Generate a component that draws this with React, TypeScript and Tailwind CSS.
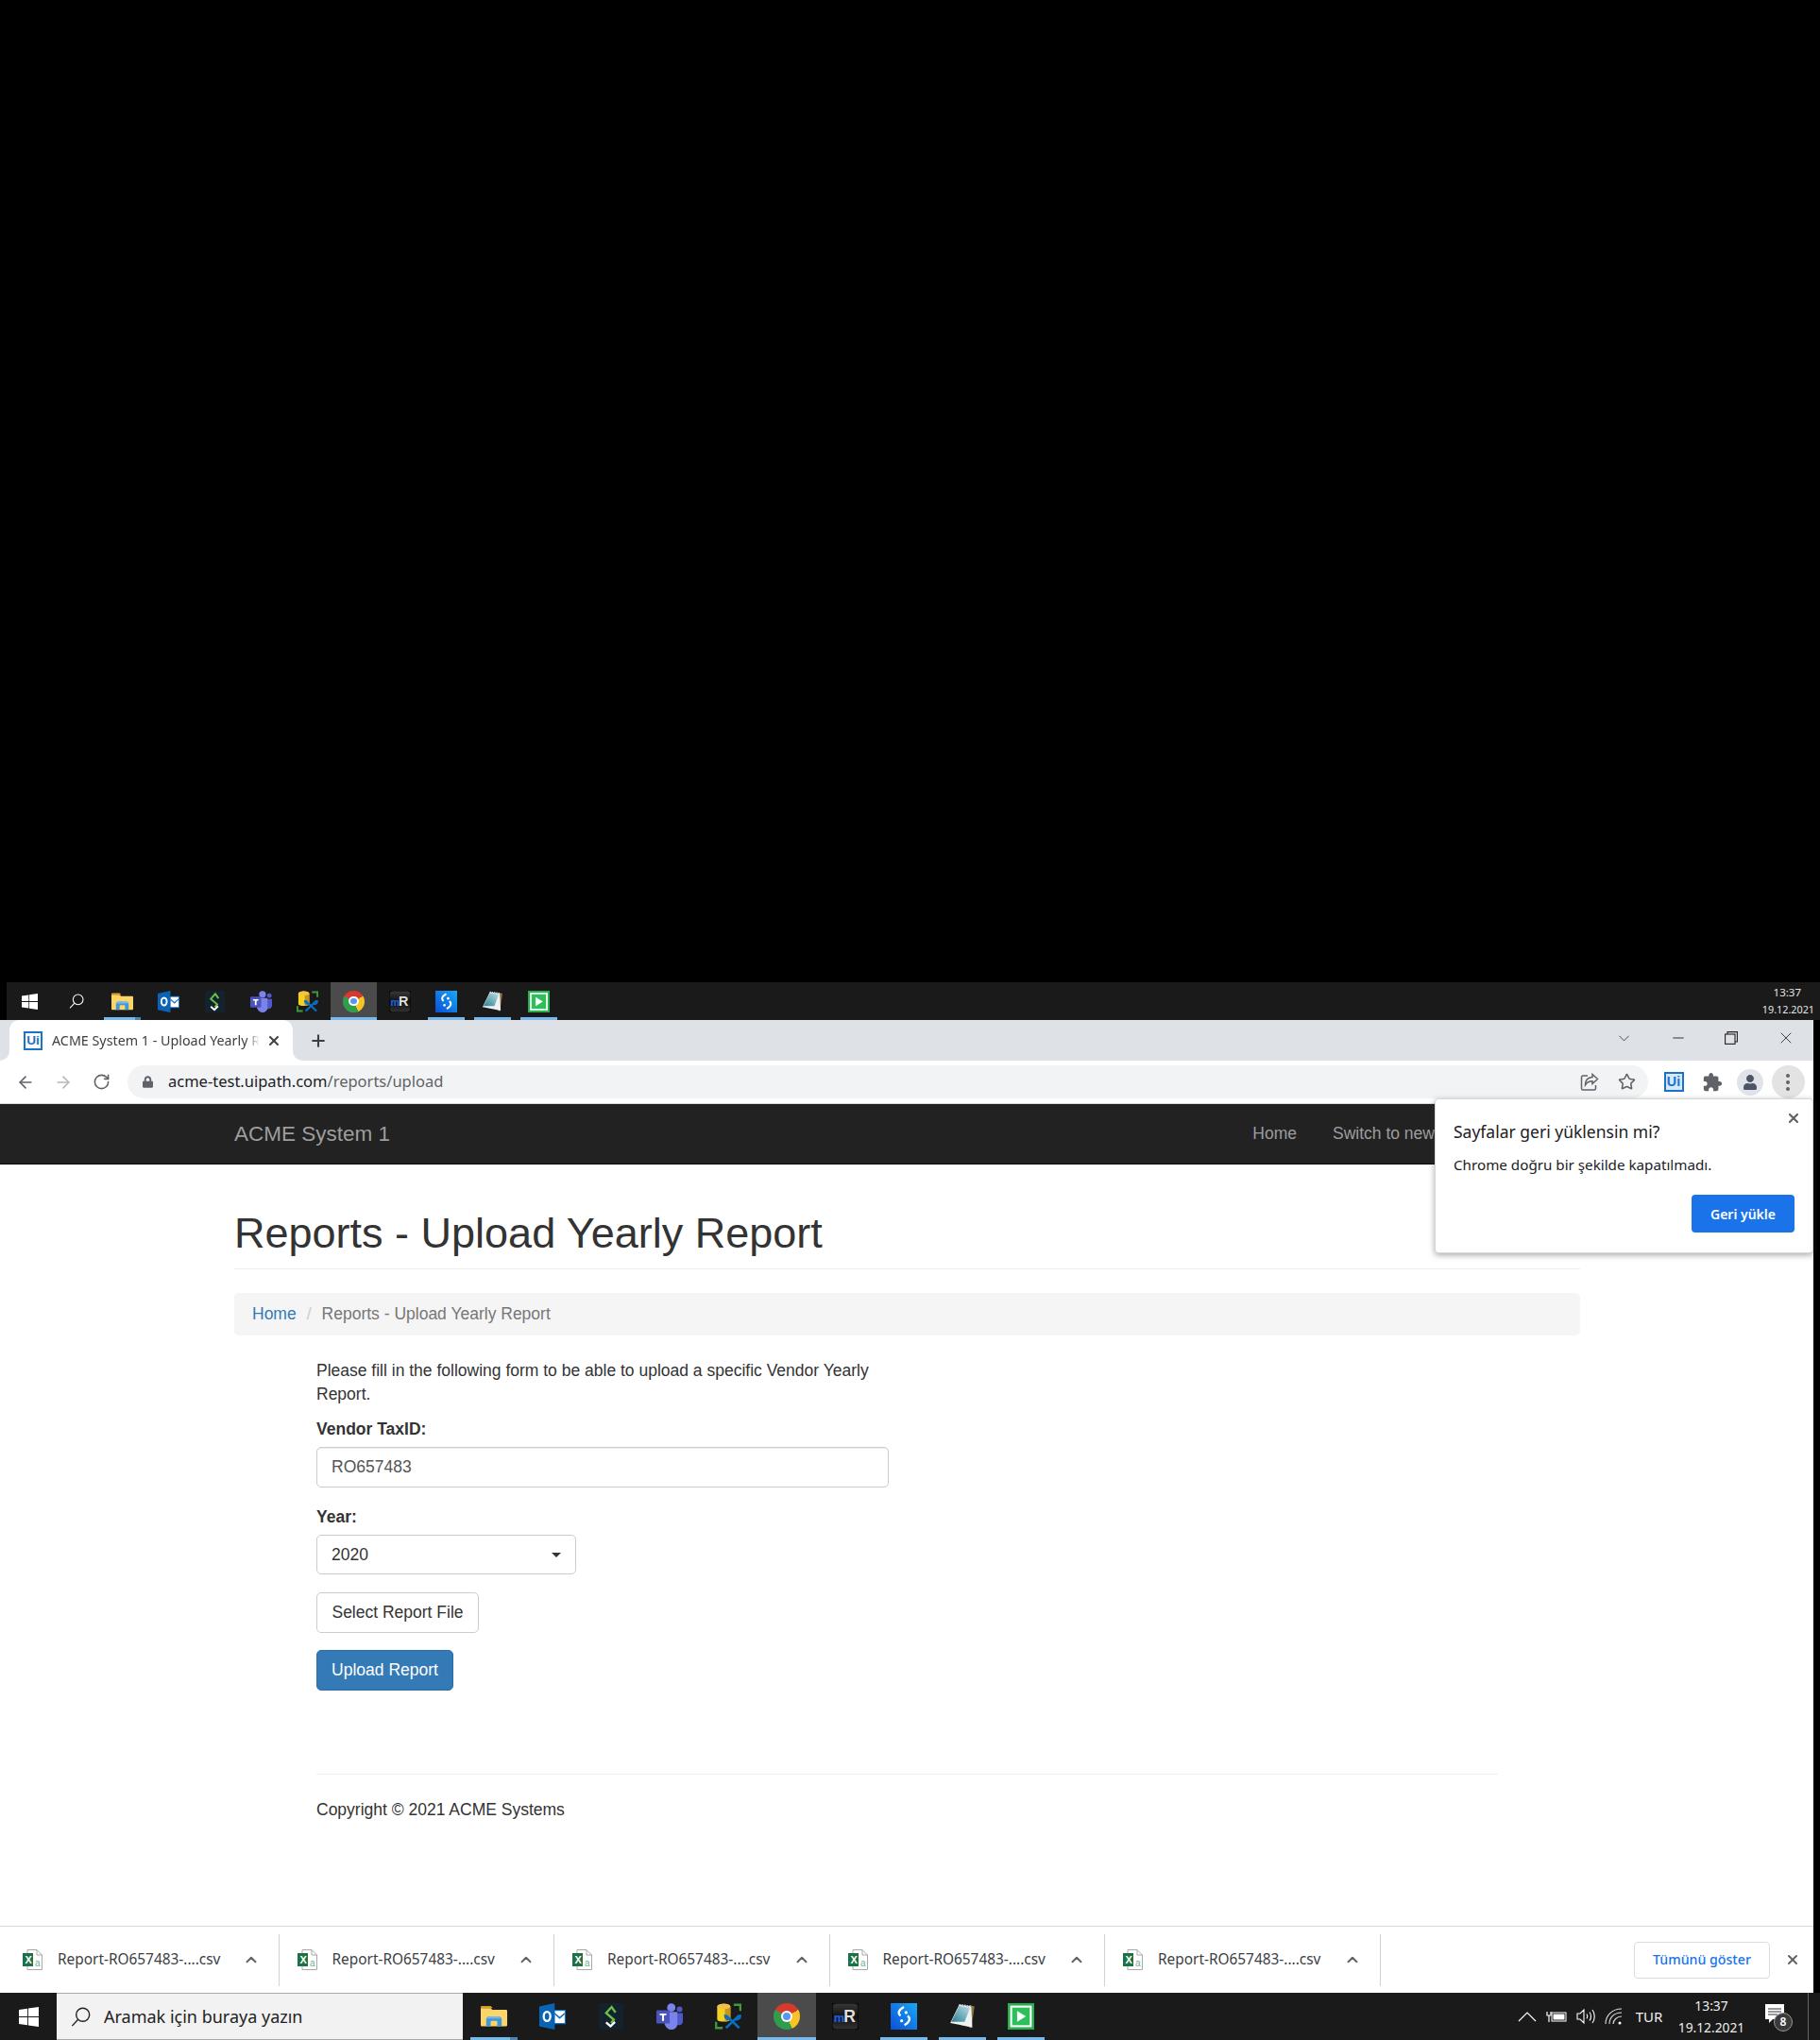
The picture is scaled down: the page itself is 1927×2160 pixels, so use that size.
import React from 'react';
import { ArrowLeft, ArrowRight, RotateCw, Star, X, Plus, ChevronDown, ChevronUp, Minus } from 'lucide-react';
import { FaUser, FaLock } from 'react-icons/fa';

type P = { s: number };
const WinLogo = ({ s }: P) => (
  <svg width={s} height={s} viewBox="0 0 24 24" fill="#fff"><path d="M0 3.4 10.4 2v9.4H0zM11.4 1.8 24 0v11.4H11.4zM0 12.6h10.4V22L0 20.6zM11.4 12.6H24V24l-12.6-1.8z" /></svg>
);
const Mag = ({ s, c }: { s: number; c: string }) => (
  <svg width={s} height={s} viewBox="0 0 24 24" fill="none" stroke={c} strokeWidth="1.6"><circle cx="14.5" cy="9.5" r="8" /><path d="M8.5 15.5 1.5 23" /></svg>
);
const Folder = ({ s }: P) => (
  <svg width={s} height={s} viewBox="0 0 24 24"><path d="M0 3.5A1 1 0 0 1 1 2.5h8l2 2h-11z" fill="#dd9c1c" /><path d="M0 4.5h9l1.5 1.5H23a1 1 0 0 1 1 1v13a1 1 0 0 1-1 1H1a1 1 0 0 1-1-1z" fill="#fcd568" /><path d="M5 21v-6a3 3 0 0 1 3-3h8a3 3 0 0 1 3 3v6h-4v-4a1 1 0 0 0-1-1h-4a1 1 0 0 0-1 1v4z" fill="#3f97dc" /><path d="M8 12h8a3 3 0 0 1 3 2H5a3 3 0 0 1 3-2z" fill="#74b8ec" /></svg>
);
const Outlook = ({ s }: P) => (
  <svg width={s} height={s} viewBox="0 0 24 24"><path d="M13 6h11v13H13z" fill="#1474c4" /><path d="M14 7h9v11h-9z" fill="#fff" /><path d="m14 8.5 4.5 4 4.5-4v1.8l-4.5 4-4.5-4z" fill="#1474c4" /><path d="M0 3 14 0v24L0 21z" fill="#0a64b5" /><ellipse cx="7" cy="12" rx="3" ry="4.2" fill="none" stroke="#fff" strokeWidth="2" /></svg>
);
const SApp = ({ s }: P) => (
  <svg width={s} height={s} viewBox="0 0 24 24"><rect x="1" y="0" width="22" height="24" rx="2" fill="#14222e" /><path d="M16 8.5 12.5 3.5 7.5 9l7 6-2.5 3" fill="none" stroke="#6cc04a" strokeWidth="2" /><path d="m7.5 17.5 4 3.5 4-4" fill="none" stroke="#fff" strokeWidth="2" /></svg>
);
const Teams = ({ s }: P) => (
  <svg width={s} height={s} viewBox="0 0 24 24"><circle cx="13.5" cy="4" r="3.8" fill="#7b83eb" /><circle cx="21" cy="5.5" r="2.6" fill="#5059c9" /><path d="M16 9h8v7c0 3-2 4-4 4h-4z" fill="#5059c9" /><path d="M8 8h11v11c0 3-3 5-5.500 5S8.500 22 7.500 19z" fill="#7b83eb" /><rect x="0" y="6.500" width="12" height="12" rx="1" fill="#4b53bc" /><path d="M3 9.500h6V11H6.900v5H5.100v-5H3z" fill="#fff" /></svg>
);
const DbTool = ({ s }: P) => (
  <svg width={s} height={s} viewBox="0 0 24 24"><path d="M2 3.500c0-4 12-4 12 0v11c0 3-12 3-12 0z" fill="#f4d21f" /><path d="M9 1.500c3 .300 5 1 5 2v11c0 1-2 2-5 2z" fill="#c9961d" /><ellipse cx="8" cy="3" rx="6" ry="2.400" fill="#f2c14a" /><path d="M17 1.500h6v5.500M1 17v5.500h6" fill="none" stroke="#3c9a3c" strokeWidth="2" /><path d="m10 11 12 11.500M22 11 10 22.500" stroke="#0a6fc2" strokeWidth="2.200" /><path d="M22.500 10.500a3 3 0 0 1-4 4M9.500 10.500a3 3 0 0 0 3 4" fill="none" stroke="#0a6fc2" strokeWidth="2" /></svg>
);
const Chrome = ({ s }: P) => (
  <div className="rounded-full relative shrink-0" style={{ width: s, height: s, background: 'conic-gradient(from 300deg,#d9392c 0 120deg,#f7c325 120deg 215deg,#2f9e4b 215deg 360deg)' }}>
    <div className="absolute rounded-full bg-white inset-[28%]" />
    <div className="absolute rounded-full bg-[#5a95ee] inset-[35%]" />
  </div>
);
const MR = ({ s }: P) => (
  <svg width={s} height={s} viewBox="0 0 24 24"><defs><linearGradient id="mr" x1="0" y1="0" x2="0" y2="1"><stop offset="0" stopColor="#3a3a3a" /><stop offset=".5" stopColor="#111" /><stop offset="1" stopColor="#333" /></linearGradient></defs><rect width="24" height="24" rx="3.500" fill="url(#mr)" stroke="#000" /><text x="1.500" y="17" fontSize="11" fontWeight="700" fontFamily="Liberation Sans" fill="#1f62e8">m</text><text x="10.500" y="17" fontSize="15" fontWeight="700" fontFamily="Liberation Sans" fill="#dedede">R</text></svg>
);
const BlueS = ({ s }: P) => (
  <svg width={s} height={s} viewBox="0 0 24 24"><defs><linearGradient id="bs" x1="0" y1="1" x2="1" y2="0"><stop offset="0" stopColor="#0a4fd8" /><stop offset="1" stopColor="#1aa8f2" /></linearGradient></defs><path d="M0 0h24v24H0z" fill="url(#bs)" /><path d="M12 3.500C7.500 6 6 9 9 11.500M12.500 20c4.500-2.500 6-6 3-8.500" fill="none" stroke="#fff" strokeWidth="2" /><circle cx="14" cy="8.500" r="1.400" fill="#fff" /><circle cx="10" cy="16" r="1.400" fill="#fff" /></svg>
);
const Note = ({ s }: P) => (
  <svg width={s} height={s} viewBox="0 0 24 24"><defs><linearGradient id="nt" x1="0" y1="1" x2="1" y2="0"><stop offset="0" stopColor="#2f7f92" /><stop offset="1" stopColor="#b9dfe6" /></linearGradient></defs><path d="M19 2 23 3 20 23l-3-2z" fill="#8a6f3f" /><path d="M9 1.500 20 3 21 22 1 18z" fill="#eef2f2" /><path d="M9 2.500 19 4 14 17 2 17z" fill="url(#nt)" /><path d="M9 1.500 20 3" stroke="#cfd6d8" strokeWidth="1.500" strokeDasharray="1.500 .800" /></svg>
);
const Play = ({ s }: P) => (
  <svg width={s} height={s} viewBox="0 0 24 24"><path d="M0 0h24v24H0z" fill="#22b14c" /><path d="M2.200 2.200h19.600v19.600H2.200z" fill="#fff" /><path d="M4 4h16v16H4z" fill="#2cbf5a" /><path d="M8.500 7v10l8-5z" fill="#fff" /></svg>
);
const UiLogo = ({ s, light }: { s: number; light?: boolean }) => (
  <div className={`flex items-center justify-center border-[2.5px] border-[#1a73c8] font-bold leading-none shrink-0 ${light ? 'bg-[#d6e8fb]' : 'bg-white'} text-[#1a73c8]`} style={{ width: s, height: s, fontSize: s * 0.68, fontFamily: 'Liberation Sans' }}>Ui</div>
);
const Share = () => (
  <svg width="20" height="20" viewBox="0 0 20 20" fill="none" stroke="#5f6368" strokeWidth="1.5"><path d="M8 3H3a1.500 1.500 0 0 0-1.500 1.500v12A1.500 1.500 0 0 0 3 18h12a1.500 1.500 0 0 0 1.500-1.500V13" /><path d="m13 1.500 5.500 5-5.500 5V8.800c-4 0-6 1.500-7.500 4 0-4.500 2.500-8 7.500-8.300z" /></svg>
);
const Puzzle = () => (
  <svg width="22" height="22" viewBox="0 0 24 24" fill="#5f6368"><path d="M20.500 11H19V7c0-1.100-.9-2-2-2h-4V3.500C13 2.120 11.880 1 10.500 1S8 2.120 8 3.500V5H4c-1.100 0-1.990.9-1.990 2v3.800H3.500c1.490 0 2.700 1.210 2.700 2.700s-1.210 2.700-2.700 2.700H2V20c0 1.100.9 2 2 2h3.800v-1.500c0-1.490 1.210-2.700 2.700-2.700 1.490 0 2.700 1.210 2.700 2.700V22H17c1.100 0 2-.9 2-2v-4h1.500c1.380 0 2.500-1.120 2.500-2.500S21.880 11 20.500 11z" /></svg>
);
const Excel = () => (
  <svg width="21" height="22" viewBox="0 0 21 22">
    <path d="M5 .5h10l5.500 5.500v15.500H5z" fill="#fff" stroke="#a8a8a8" />
    <path d="M15 .5V6h5.500" fill="none" stroke="#a8a8a8" />
    <path d="M0 4h11v14H0z" fill="#1e7145" />
    <text x="2.600" y="15" fontSize="11" fontWeight="700" fontFamily="Liberation Sans" fill="#fff">X</text>
    <text x="13" y="18" fontSize="10" fontFamily="Liberation Sans" fill="#6fae8d">a</text>
  </svg>
);

const bar = [
  { I: Folder, u: 'split' },
  { I: Outlook, u: '' },
  { I: SApp, u: '' },
  { I: Teams, u: '' },
  { I: DbTool, u: '' },
  { I: Chrome, u: 'active' },
  { I: MR, u: '' },
  { I: BlueS, u: 'on' },
  { I: Note, u: 'on' },
  { I: Play, u: 'on' },
];

function Cell({ w, icon, u }: { w: string; icon: React.ReactNode; u: string }) {
  return (
    <div className={`${w} h-full relative flex items-center justify-center shrink-0 ${u === 'active' ? 'bg-[#4b4b4b]' : ''}`}>
      {icon}
      {u === 'active' && <div className="absolute bottom-0 left-0 right-0 h-[3px] bg-[#76b9ed]" />}
      {u === 'on' && <div className="absolute bottom-0 left-[10%] right-[10%] h-[3px] bg-[#76b9ed]" />}
      {u === 'split' && <div className="absolute bottom-0 left-[10%] right-[10%] h-[3px] bg-[#76b9ed]"><div className="absolute right-0 top-0 bottom-0 w-[16%] bg-[#4f86ad]" /></div>}
    </div>
  );
}

function DownloadItem({ first }: { first?: boolean }) {
  return (
    <div className={`w-[291.5px] h-[55px] flex items-center border-r border-[#d0d2d4] shrink-0 ${first ? 'pl-[20px]' : 'pl-[19px]'}`}>
      <Excel />
      <span className="ml-[16px] text-[15.4px] text-[#3c4043] whitespace-nowrap">Report-RO657483-....csv</span>
      <ChevronUp className="ml-auto mr-[20px] w-[18px] h-[18px] text-[#5f6368]" strokeWidth={2.5} />
    </div>
  );
}

const ws = { fontFamily: '"Noto Sans", sans-serif' };
const ar = { fontFamily: '"Liberation Sans", Arial, sans-serif' };

export default function App() {
  return (
    <div className="w-[1927px] h-[2160px] bg-black flex flex-col overflow-hidden" style={ws}>
      <div className="h-[1040px] shrink-0" />

      <div className="h-[40px] ml-[7px] w-[1920px] bg-[#1a1a1a] flex items-stretch shrink-0">
        <Cell w="w-[49px]" u="" icon={<WinLogo s={17} />} />
        <Cell w="w-[49px]" u="" icon={<Mag s={16} c="#fff" />} />
        {bar.map((b, i) => <Cell key={i} w="w-[49px]" u={b.u} icon={<b.I s={23} />} />)}
        <div className="ml-auto pr-[6px] flex flex-col justify-center items-end text-[11.5px] leading-[18px] text-[#e6e6e6]">
          <span className="pr-[14px]">13:37</span>
          <span className="text-[10.8px]">19.12.2021</span>
        </div>
      </div>

      <div className="w-[1920px] h-[1030px] flex flex-col bg-white relative shrink-0">
        <div className="h-[43px] bg-[#dee1e6] flex items-stretch shrink-0 text-[#3c4043]">
          <div className="ml-[10px] w-[300px] bg-white rounded-t-[10px] relative flex items-center pl-[15px] shrink-0">
            <div className="absolute left-[-10px] bottom-0 w-[10px] h-[10px] bg-white"><div className="w-full h-full bg-[#dee1e6] rounded-br-[10px]" /></div>
            <div className="absolute right-[-10px] bottom-0 w-[10px] h-[10px] bg-white"><div className="w-full h-full bg-[#dee1e6] rounded-bl-[10px]" /></div>
            <UiLogo s={20} />
            <span className="ml-[10px] w-[220px] overflow-hidden whitespace-nowrap text-[14.3px] text-[#3c4043]" style={{ WebkitMaskImage: 'linear-gradient(to right,#000 205px,transparent 220px)' }}>ACME System 1 - Upload Yearly Report</span>
            <X className="absolute right-[12px] w-[16px] h-[16px] text-[#3c4043]" strokeWidth={3} />
          </div>
          <Plus className="self-center ml-[17px] w-[20px] h-[20px] text-[#3c4043]" strokeWidth={2.5} />
          <div className="ml-auto flex items-start pt-[5px] text-[#222]">
            <div className="w-[28px] h-[28px] flex items-center justify-center"><ChevronDown className="w-[19px] h-[19px]" strokeWidth={1} /></div>
            <div className="ml-[30px] w-[28px] h-[28px] flex items-center justify-center"><Minus className="w-[18px] h-[18px]" strokeWidth={1.2} /></div>
            <div className="ml-[28px] w-[28px] h-[28px] flex items-center justify-center">
              <svg width="14" height="14" viewBox="0 0 14 14" fill="none" stroke="#222" strokeWidth="1.1"><rect x=".6" y="3" width="10.4" height="10.4" /><path d="M3 3V.6h10.4V11H11" /></svg>
            </div>
            <div className="ml-[30px] mr-[15px] w-[28px] h-[28px] flex items-center justify-center"><X className="w-[20px] h-[20px]" strokeWidth={1} /></div>
          </div>
        </div>

        <div className="h-[46px] border-b border-[#dadce0] flex items-center pl-[7px] shrink-0">
          <div className="w-[40px] flex justify-center"><ArrowLeft className="w-[20px] h-[20px] text-[#5f6368]" strokeWidth={2} /></div>
          <div className="w-[40px] flex justify-center"><ArrowRight className="w-[20px] h-[20px] text-[#b5b8bb]" strokeWidth={2} /></div>
          <div className="w-[40px] flex justify-center"><RotateCw className="w-[19px] h-[19px] text-[#5f6368]" strokeWidth={2} /></div>
          <div className="ml-[8px] w-[1610px] h-[35px] rounded-full bg-[#f1f3f4] flex items-center pl-[16px] pr-[13px] shrink-0">
            <FaLock className="w-[11px] h-[13px] text-[#5f6368]" />
            <span className="ml-[16px] text-[16.5px] text-[#5f6368] whitespace-nowrap"><span className="text-[#202124]">acme-test.uipath.com</span>/reports/upload</span>
            <div className="ml-auto flex items-center gap-[20px]">
              <Share />
              <Star className="w-[19px] h-[19px] text-[#5f6368]" strokeWidth={2} />
            </div>
          </div>
          <div className="ml-[7px] w-[40px] flex justify-center"><UiLogo s={21} light /></div>
          <div className="w-[41px] flex justify-center"><Puzzle /></div>
          <div className="w-[40px] flex justify-center"><div className="w-[28px] h-[28px] rounded-full bg-[#e0e3e8] flex items-center justify-center"><FaUser className="w-[16px] h-[16px] text-[#4a5568]" /></div></div>
          <div className="w-[40px] flex justify-center"><div className="w-[35px] h-[35px] rounded-full bg-[#e3e3e3] flex flex-col items-center justify-center gap-[3px]">
            <div className="w-[4px] h-[4px] rounded-full bg-[#5f6368]" /><div className="w-[4px] h-[4px] rounded-full bg-[#5f6368]" /><div className="w-[4px] h-[4px] rounded-full bg-[#5f6368]" />
          </div></div>
        </div>

        <div className="flex-1 flex flex-col overflow-hidden" style={ar}>
          <div className="h-[64px] bg-[#222222] border-b border-[#080808] flex items-center pl-[248px] shrink-0">
            <span className="text-[22.5px] text-[#9d9d9d]">ACME System 1</span>
            <span className="ml-auto text-[17.5px] text-[#9d9d9d]">Home</span>
            <span className="ml-[38px] mr-[299px] w-[210px] text-[17.5px] text-[#9d9d9d] whitespace-nowrap">Switch to new</span>
          </div>

          <div className="ml-[248px] mr-[247px] h-[111px] border-b border-[#eeeeee] flex items-center pt-[36px] shrink-0">
            <h1 className="text-[45px] leading-[50px] text-[#333333]">Reports - Upload Yearly Report</h1>
          </div>

          <div className="mt-[25px] ml-[248px] mr-[247px] h-[45px] bg-[#f5f5f5] rounded-[5px] flex items-center pl-[19px] text-[17.5px] shrink-0">
            <span className="text-[#337ab7]">Home</span>
            <span className="mx-[11px] text-[#cccccc]">/</span>
            <span className="text-[#777777]">Reports - Upload Yearly Report</span>
          </div>

          <div className="ml-[335px] w-[606px] mt-[25px] text-[17.5px] text-[#333333] shrink-0">
            <p className="w-[590px] leading-[25px]">Please fill in the following form to be able to upload a specific Vendor Yearly Report.</p>
            <div className="mt-[12px] font-bold leading-[25px]">Vendor TaxID:</div>
            <div className="mt-[6px] h-[43px] border border-[#cccccc] rounded-[5px] flex items-center pl-[15px] text-[#555555] shadow-[inset_0_1px_1px_rgba(0,0,0,0.075)]">RO657483</div>
            <div className="mt-[19px] font-bold leading-[25px]">Year:</div>
            <div className="mt-[6px] w-[275px] h-[42px] border border-[#cccccc] rounded-[5px] flex items-center pl-[15px] pr-[15px] text-[#333333]">
              2020
              <div className="ml-auto w-0 h-0 border-x-[5px] border-x-transparent border-t-[5px] border-t-[#333333]" />
            </div>
            <div className="mt-[19px] w-[172px] h-[43px] border border-[#cccccc] rounded-[5px] flex items-center justify-center text-[#333333]">Select Report File</div>
            <div className="mt-[18px] w-[145px] h-[43px] rounded-[5px] bg-[#337ab7] border border-[#2e6da4] flex items-center justify-center text-white">Upload Report</div>
          </div>

          <div className="ml-[335px] w-[1251px] mt-[88px] border-t border-[#eeeeee] pt-[25px] text-[17.5px] leading-[25px] text-[#333333] shrink-0">Copyright © 2021 ACME Systems</div>

          <div className="mt-auto h-[71px] border-t border-[#d6d8da] flex items-center pl-[4px] shrink-0 bg-white" style={ws}>
            <DownloadItem first /><DownloadItem /><DownloadItem /><DownloadItem /><DownloadItem />
            <div className="ml-auto mr-[16px] w-[144px] h-[39px] border border-[#dadce0] rounded-[4px] flex items-center justify-center text-[14.2px] font-medium text-[#1a73e8]">Tümünü göster</div>
            <X className="mr-[14px] w-[16px] h-[16px] text-[#5f6368]" strokeWidth={3} />
          </div>
        </div>

        <div className="absolute left-[1519px] top-[83px] w-[401px] h-[164px] bg-white rounded-[4px] border border-[#d8d8d8] shadow-[0_2px_6px_rgba(60,64,67,0.45)] flex flex-col pl-[19px]">
          <X className="absolute right-[12px] top-[12px] w-[16px] h-[16px] text-[#5f6368]" strokeWidth={3.2} />
          <div className="mt-[19px] text-[17.5px] leading-[30px] text-[#202124]">Sayfalar geri yüklensin mi?</div>
          <div className="mt-[8px] text-[15.2px] leading-[24px] text-[#202124]">Chrome doğru bir şekilde kapatılmadı.</div>
          <div className="mt-[20px] self-end mr-[19px] w-[109px] h-[40px] bg-[#1a73e8] rounded-[4px] flex items-center justify-center text-white text-[14px] font-semibold">Geri yükle</div>
        </div>
      </div>

      <div className="h-[50px] w-full bg-[#1a1a1a] flex items-stretch shrink-0">
        <Cell w="w-[60px]" u="" icon={<WinLogo s={21} />} />
        <div className="w-[430px] bg-[#f2f2f2] border-y border-[#a8a8a8] flex items-center pl-[15px] shrink-0">
          <Mag s={21} c="#222222" />
          <span className="ml-[14px] text-[18px] text-[#222222]">Aramak için buraya yazın</span>
        </div>
        <div className="ml-[2px] flex items-stretch">
          {bar.map((b, i) => <Cell key={i} w="w-[62px]" u={b.u} icon={<b.I s={28} />} />)}
        </div>
        <div className="ml-auto flex items-center text-[#eeeeee]">
          <svg width="20" height="12" viewBox="0 0 20 12" fill="none" stroke="#fff" strokeWidth="1.2"><path d="M1 11 10 2l9 9" /></svg>
          <svg className="ml-[10px]" width="22" height="14" viewBox="0 0 22 14" fill="none"><rect x="6" y="3" width="15" height="9" stroke="#fff" /><rect x="7.5" y="4.5" width="12" height="6" fill="#fff" /><path d="M1 2v4h4V2M3 6v7" stroke="#fff" strokeWidth="1.2" /></svg>
          <svg className="ml-[10px]" width="20" height="18" viewBox="0 0 20 18" fill="none" stroke="#fff" strokeWidth="1.1"><path d="M1 6h3l4-4v14l-4-4H1zM11 6.500c1 1.500 1 3.500 0 5M14 4.500c2 2.500 2 6.500 0 9M17 2c3 4 3 10 0 14" /></svg>
          <svg className="ml-[10px]" width="20" height="18" viewBox="0 0 20 18" fill="none" stroke="#ddd" strokeWidth="1.1"><path d="M1 17C1 8 8 1 18 1M5 17C5 10 10 5 18 5M9 17c0-4 4-8 9-8" /><circle cx="16" cy="16" r="1.500" fill="#fff" stroke="none" /></svg>
          <span className="ml-[7px] text-[15px] w-[40px] text-center">TUR</span>
          <div className="ml-[7px] w-[78px] flex flex-col items-center text-[13.8px] leading-[23px]"><span>13:37</span><span>19.12.2021</span></div>
          <div className="ml-[16px] w-[32px] relative h-[26px]">
            <svg width="21" height="20" viewBox="0 0 21 20" className="ml-[2px]"><path d="M0 0h20v16H8l-4 4v-4H0z" fill="#fff" /><path d="M3 5h14M3 8h14M3 11h10" stroke="#333" strokeWidth="1" /></svg>
            <div className="absolute left-[11px] top-[9px] w-[20px] h-[20px] rounded-full bg-[#3a3a3a] border border-[#999] flex items-center justify-center text-[12px] font-semibold text-white">8</div>
          </div>
          <div className="ml-[15px] w-px h-full bg-[#666]" />
          <div className="w-[12px]" />
        </div>
      </div>
    </div>
  );
}
